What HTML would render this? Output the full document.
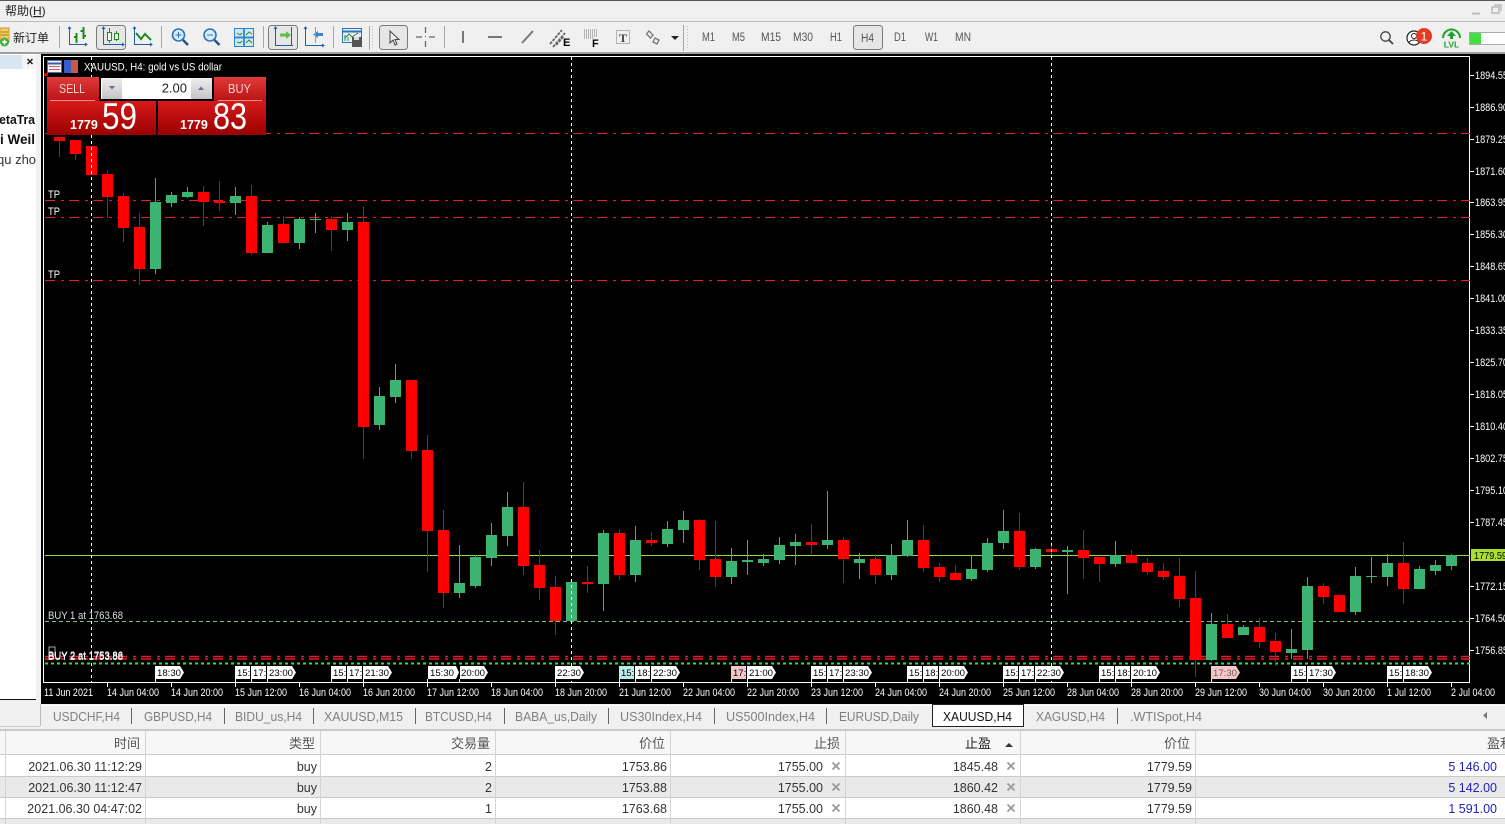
<!DOCTYPE html>
<html>
<head>
<meta charset="utf-8">
<style>
html,body{margin:0;padding:0;background:#000;overflow:hidden;width:1505px;height:824px}
svg{display:block}
text{font-family:"Liberation Sans","Noto Sans CJK SC",sans-serif}
.d{font-size:11px;fill:#fff}
.p{font-size:11px;fill:#fff}
.g{font-size:9.5px;fill:#000}
.tab{font-size:12.5px;fill:#808080}
.th{font-size:13px;fill:#555;text-anchor:end}
.td{font-size:12.5px;fill:#333;text-anchor:end}
.bl{font-size:12.5px;fill:#2222bb;text-anchor:end}
.tf{font-size:11.5px;fill:#555}
</style>
</head>
<body>
<svg width="1505" height="824" viewBox="0 0 1505 824" xmlns="http://www.w3.org/2000/svg">
<defs>
<linearGradient id="r1" x1="0" y1="0" x2="0" y2="1"><stop offset="0" stop-color="#e23a3a"/><stop offset="1" stop-color="#b81414"/></linearGradient>
<linearGradient id="r2" x1="0" y1="0" x2="0" y2="1"><stop offset="0" stop-color="#d81a1a"/><stop offset="1" stop-color="#9a0000"/></linearGradient>
<linearGradient id="sp" x1="0" y1="0" x2="0" y2="1"><stop offset="0" stop-color="#eee"/><stop offset="1" stop-color="#c4c4c4"/></linearGradient>
</defs>

<!-- window chrome -->
<rect width="1505" height="54" fill="#f0f0f0"/>
<rect width="1505" height="1" fill="#555"/>
<rect y="21" width="1505" height="1" fill="#bdbdbd"/>
<rect y="52" width="1505" height="2" fill="#a0a0a0"/>
<text x="5" y="15" font-size="12" fill="#222">帮助(<tspan text-decoration="underline">H</tspan>)</text>
<path d="M1472 13.5h8" stroke="#bbb" stroke-width="2"/>
<path d="M1492 7h7v6h-7zM1494 5h7v6" fill="none" stroke="#bbb" stroke-width="1.5"/>

<!-- toolbar -->
<path d="M59.5 26V48M161.5 26V48M263.5 26V48M333.5 26V48M369.5 26V50M444.5 26V48M683.5 25V51" stroke="#a8a8a8"/>
<path d="M372.5 26V50M687.5 26V50" stroke="#bbb" stroke-dasharray="1 2"/>
<rect x="96.5" y="25.5" width="29" height="24" rx="3" fill="#e6e6e6" stroke="#7a7a7a"/>
<rect x="268.5" y="25.5" width="29" height="24" rx="3" fill="#e6e6e6" stroke="#7a7a7a"/>
<rect x="379.5" y="25.5" width="28" height="24" rx="3" fill="#e6e6e6" stroke="#7a7a7a"/>
<rect x="853.5" y="25.5" width="29" height="24" rx="3" fill="#e6e6e6" stroke="#7a7a7a"/>

<!-- new order -->
<rect x="0" y="28" width="9" height="14" fill="#f4cf62" stroke="#c99a2e"/>
<path d="M1 32h7M1 35h7" stroke="#a87c1e"/>
<circle cx="4.5" cy="42" r="4.5" fill="#3fae3f"/>
<path d="M4.5 39.5v5M2 42h5" stroke="#fff" stroke-width="1.5"/>
<text x="13" y="42" font-size="12" fill="#222">新订单</text>

<!-- chart type icons -->
<g fill="none" stroke="#1d5fa8">
<path d="M69.5 27V44.5H87M68 29l1.500-2 1.500 2M85 43l2 1.500-2 1.500"/>
<path d="M103.500 27V44.500H124M102 29l1.500-2 1.500 2M122 43l2 1.500-2 1.500"/>
<path d="M134.500 27V44.500H152M133 29l1.500-2 1.500 2M150 43l2 1.500-2 1.500"/>
<path d="M275.500 27V45.500H293M291.500 27V45.500M274 29l1.500-2 1.500 2"/>
<path d="M305.500 27V45.500H324M304 29l1.500-2 1.500 2M322 44l2 1.500-2 1.500"/>
</g>
<path d="M76.500 33V43M83.500 27V39" stroke="#1f8a1f" stroke-width="2"/>
<path d="M74 37h2M80.500 31h3M84 36h2" stroke="#1f8a1f" stroke-width="2"/>
<path d="M109.500 28V43M116.500 31V41" stroke="#1f8a1f"/>
<rect x="107.500" y="32.500" width="4" height="8" fill="#f4f4f4" stroke="#1f8a1f"/>
<rect x="114.500" y="33.500" width="4" height="6" fill="#f4f4f4" stroke="#1f8a1f"/>
<path d="M136 33L141 39L145 34L151 40" fill="none" stroke="#1f8a1f" stroke-width="2"/>
<!-- zoom -->
<circle cx="178.5" cy="35" r="6" fill="#d8ecfa" stroke="#2b74b8" stroke-width="1.6"/>
<path d="M175.5 35h6M178.5 32v6" stroke="#2b74b8"/>
<path d="M183 40l5 5" stroke="#23507e" stroke-width="2.5"/>
<circle cx="210" cy="35" r="6" fill="#d8ecfa" stroke="#2b74b8" stroke-width="1.6"/>
<path d="M207 35h6" stroke="#2b74b8"/>
<path d="M214.500 40l5 5" stroke="#23507e" stroke-width="2.5"/>
<!-- tile -->
<rect x="234.500" y="28.500" width="19" height="18" fill="#cfe7f8" stroke="#2b84c8"/>
<path d="M234 37.500h20M244 28v19" stroke="#2b84c8" stroke-width="1.800"/>
<path d="M237 33l3 2 2-2M246 35l3-3 3 2M237 42l3 1 2-2M246 43l3-3 3 3" fill="none" stroke="#2d8a2d"/>
<!-- shift -->
<path d="M280 33.500h6v-2.500l5 4-5 4v-2.500h-6z" fill="#5fbf4a"/>
<path d="M318 31l-5 3.500 5 3.500z M318 33h5v3h-5z" fill="#3a86c8"/>
<path d="M315.500 27v16" stroke="#999"/>
<!-- template -->
<rect x="342.500" y="28.500" width="19" height="14" fill="#e6f1fa" stroke="#2b74b8"/>
<path d="M342 31.500h20" stroke="#2b74b8" stroke-width="2"/>
<path d="M345 41v-6M348 41v-4M345 38l4-4 3 3 6-4" fill="none" stroke="#2d8a2d"/>
<rect x="352" y="37" width="10" height="10" fill="#555"/>
<rect x="354" y="37" width="5" height="3" fill="#ddd"/>
<!-- cursor -->
<path d="M390 31v12l3-3 2 5 2-1-2-4.500h4z" fill="#eee" stroke="#444"/>
<path d="M416 37h6M429 37h6M425.500 27v6M425.500 41v6" stroke="#666" stroke-width="1.3"/>
<path d="M425 36h1v1h-1z" fill="#666"/>
<path d="M463 31v12" stroke="#777" stroke-width="2"/>
<path d="M488 37h14" stroke="#777" stroke-width="2"/>
<path d="M522 43l11-12" stroke="#777" stroke-width="2"/>
<path d="M550 44l12-14M553 47l12-14M556 45l8-9" stroke="#666" stroke-width="1.8" stroke-dasharray="3 1"/>
<text x="563" y="46" font-size="11" font-weight="bold" fill="#000">E</text>
<path d="M584 30h13M584 32h13M584 34h13M584 36h13M584 38h10" stroke="#777" stroke-dasharray="1 1"/>
<text x="592" y="47" font-size="11" font-weight="bold" fill="#000">F</text>
<rect x="616.5" y="30.500" width="13" height="13" fill="none" stroke="#777" stroke-dasharray="1 1"/>
<text x="619" y="42" font-size="12" fill="#444" style="font-family:'Liberation Serif',serif;font-weight:bold">T</text>
<path d="M649 31l4 4-2.500 3-4-4zM655 38l4 2-2 4-4-2z" fill="none" stroke="#777" stroke-width="1.300"/>
<path d="M671 36h8l-4 4z" fill="#222"/>
<!-- timeframes -->
<text class="tf" x="702" y="41" textLength="13" lengthAdjust="spacingAndGlyphs">M1</text>
<text class="tf" x="732" y="41" textLength="13" lengthAdjust="spacingAndGlyphs">M5</text>
<text class="tf" x="761" y="41" textLength="20" lengthAdjust="spacingAndGlyphs">M15</text>
<text class="tf" x="793" y="41" textLength="20" lengthAdjust="spacingAndGlyphs">M30</text>
<text class="tf" x="830" y="41" textLength="12" lengthAdjust="spacingAndGlyphs">H1</text>
<text class="tf" x="861" y="42" textLength="13" lengthAdjust="spacingAndGlyphs">H4</text>
<text class="tf" x="894" y="41" textLength="12" lengthAdjust="spacingAndGlyphs">D1</text>
<text class="tf" x="925" y="41" textLength="13" lengthAdjust="spacingAndGlyphs">W1</text>
<text class="tf" x="955" y="41" textLength="16" lengthAdjust="spacingAndGlyphs">MN</text>
<!-- right icons -->
<circle cx="1385.5" cy="36.5" r="4.7" fill="none" stroke="#444" stroke-width="1.3"/>
<path d="M1389 40l4 4" stroke="#444" stroke-width="1.8"/>
<circle cx="1414" cy="38" r="7" fill="#fff" stroke="#222" stroke-width="1.2"/>
<circle cx="1414" cy="36" r="2.5" fill="none" stroke="#222"/>
<path d="M1409 43c1-4 9-4 10 0" fill="none" stroke="#222"/>
<circle cx="1424" cy="36" r="8" fill="#e03c26"/>
<text x="1424" y="40.5" font-size="12" fill="#fff" text-anchor="middle">1</text>
<path d="M1443 38a8.500 8.500 0 0 1 17 0" fill="none" stroke="#20a030" stroke-width="2"/>
<path d="M1451.5 31l4.500 5h-3v3h-3v-3h-3z" fill="#20a030"/>
<text x="1451.5" y="47.5" font-size="8.5" font-weight="bold" fill="#20a030" text-anchor="middle">LVL</text>
<rect x="1469.5" y="32.5" width="36" height="12" fill="#fff" stroke="#aaa"/>
<rect x="1470" y="33" width="11" height="11" fill="#3fe03f"/>

<!-- left panel -->
<rect x="0" y="54" width="41" height="650" fill="#f0f0f0"/>
<rect x="0" y="54" width="38" height="646" fill="#fff"/>
<rect x="0" y="55" width="22" height="14" fill="#d8e6f4"/>
<rect x="22" y="55" width="16" height="14" fill="#f4f5f6"/>
<path d="M27.5 59l5 5M32.5 59l-5 5" stroke="#222" stroke-width="1.5"/>
<rect x="0" y="699" width="36" height="1" fill="#111"/>
<text x="-11" y="124" font-size="13" font-weight="bold" fill="#111" textLength="46" lengthAdjust="spacingAndGlyphs">MetaTra</text>
<text x="0" y="144" font-size="13.5" font-weight="bold" fill="#111">i Weil</text>
<text x="-3" y="164" font-size="13" fill="#333">qu zho</text>
<rect x="36" y="54" width="5" height="650" fill="#f0f0f0"/>

<!-- chart -->
<rect x="41" y="54" width="1464" height="650" fill="#000"/>
<path d="M43.5 56V682.5M43 56.5H1470M1469.5 56V682.5M43 682.500H1470" stroke="#fff" fill="none"/>
<!-- price line & levels -->
<path d="M45 555.5H1470" stroke="#90dc40"/>
<path d="M45 621.5H1470" stroke="#70c870" stroke-dasharray="4 3"/>
<path d="M45 663.5H1470" stroke="#30e040" stroke-width="2" stroke-dasharray="3 3"/>
<g fill="none" stroke="#ee1c28" stroke-dasharray="10 6 3 5">
<path d="M45 133.5H1470"/>
<path d="M45 200.5H1470"/>
<path d="M45 217.5H1470"/>
<path d="M45 280.5H1470"/>
<path d="M45 656.5H1470" stroke-width="1.5"/>
<path d="M45 659H1470" stroke-width="1.5"/>
</g>
<!-- candles: green -->
<path stroke="#3cb371" fill="none" d="M155.5 178V274M171.5 192V207M187.5 187V198M235.5 187V215M267.5 222V253M299.5 217V249M315.5 213V233M347.5 213V241M379.5 387V430M395.5 364V403M459.5 545V598M475.5 555V588M491.5 523V566M507.5 492V546M571.5 582V621M603.5 530V611M635.5 526V582M667.5 521V547M683.5 511V543M731.5 548V584M747.5 540V575M763.5 554V566M779.5 537V564M795.5 534V565M827.5 491V549M859.5 553V579M891.5 544V580M907.5 520V557M971.5 555V581M987.5 538V572M1003.5 510V549M1035.5 548V569M1067.5 546V594M1115.5 541V567M1211.5 613V661M1243.5 625V635M1291.5 629V659M1307.5 577V659M1355.5 567V615M1371.5 557V583M1387.5 554V586M1419.5 566V589M1435.5 560V575M1451.5 554V570"/>
<path stroke="#3cb371" stroke-width="11" fill="none" d="M155.5 202V269M171.5 195V203M187.5 192V197M235.5 196V203M267.5 225V253M299.5 219V243M315.5 219V220M347.5 222V230M379.5 396V425M395.5 380V397M459.5 583V593M475.5 557V586M491.5 535V558M507.5 507V536M571.5 582V621M603.5 533V584M635.5 540V575M667.5 529V544M683.5 520V530M731.5 561V577M747.5 560V562M763.5 559V563M779.5 545V560M795.5 542V546M827.5 540V545M859.5 559V563M891.5 555V575M907.5 540V556M971.5 569V579M987.5 543V570M1003.5 531V543M1035.5 549V567M1067.5 550V552M1115.5 555V564M1211.5 624V660M1243.5 627V635M1291.5 649V653M1307.5 586V650M1355.5 576V612M1371.5 576V577M1387.5 563V577M1419.5 569V589M1435.5 565V571M1451.5 555V566"/>
<!-- candles: red -->
<path stroke="#e00000" fill="none" d="M59.5 137V157M75.5 140V160M107.5 170V218M123.5 193V242M139.5 213V285M203.5 186V226M219.5 181V211M251.5 185V255M283.5 216V243M331.5 216V251M363.5 206V459M411.5 380V459M427.5 435V572M443.5 510V608M523.5 482V575M539.5 550V600M555.5 576V635M587.5 566V593M619.5 529V580M651.5 532V546M699.5 519V570M715.5 521V587M811.5 524V554M843.5 537V583M875.5 554V584M923.5 525V572M939.5 563V582M955.5 565V580M1019.5 513V570M1051.5 542V555M1083.5 530V579M1099.5 557V582M1131.5 550V563M1147.5 558V575M1163.5 563V580M1179.5 558V607M1195.5 571V677M1227.5 614V638M1259.5 618V648M1275.5 633V666M1323.5 583V604M1403.5 542V604"/>
<path stroke="#ff0000" stroke-width="11" fill="none" d="M59.5 137V141M75.5 140V154M91.5 146V175M107.5 174V197M123.5 196V228M139.5 227V269M203.5 192V202M219.5 201V203M251.5 196V253M283.5 224V243M331.5 219V230M363.5 222V427M411.5 380V451M427.5 450V531M443.5 530V593M523.5 507V566M539.5 565V588M555.5 587V621M587.5 582V584M619.5 533V575M651.5 540V543M699.5 520V560M715.5 559V577M811.5 542V545M843.5 540V559M875.5 559V575M923.5 540V568M939.5 567V577M955.5 573V580M1019.5 531V567M1051.5 549V552M1083.5 550V558M1099.5 557V564M1131.5 555V563M1147.5 563V572M1163.5 571V577M1179.5 576V599M1195.5 598V660M1227.5 624V638M1259.5 627V642M1275.5 641V652M1323.5 586V597M1339.5 595V612M1403.5 563V589"/>
<!-- crosshair verticals -->
<path d="M91.5 57V682M571.5 57V682M1051.5 57V682" stroke="#fff" stroke-dasharray="3 3"/>

<!-- chart labels -->
<text x="48" y="198" class="p" textLength="12" lengthAdjust="spacingAndGlyphs">TP</text>
<text x="48" y="215" class="p" textLength="12" lengthAdjust="spacingAndGlyphs">TP</text>
<text x="48" y="278" class="p" textLength="12" lengthAdjust="spacingAndGlyphs">TP</text>
<text x="48" y="619" class="p" style="fill:#ddd" textLength="75" lengthAdjust="spacingAndGlyphs">BUY 1 at 1763.68</text>
<text x="48" y="660" class="p" textLength="75" lengthAdjust="spacingAndGlyphs">BUY 2 at 1753.88</text>
<text x="48" y="659" class="p" textLength="75" lengthAdjust="spacingAndGlyphs">BUY 2 at 1753.86</text>
<rect x="49" y="647" width="6" height="8" fill="none" stroke="#ccc" stroke-width=".8"/>

<!-- chart title -->
<rect x="47.5" y="60.5" width="14" height="12" fill="#f4f4f4" stroke="#4a6fb5"/>
<path d="M48 63.5h13" stroke="#3a5ca8" stroke-width="2"/>
<path d="M49 66.5h11M49 69.500h11" stroke="#d06060"/>
<rect x="64" y="60" width="7" height="13" fill="#3a5cc8"/>
<rect x="71" y="60" width="7" height="13" fill="#c85a4a"/>
<text x="84" y="70.5" class="p" textLength="138" lengthAdjust="spacingAndGlyphs">XAUUSD, H4:  gold vs US dollar</text>
<rect x="44" y="73" width="4" height="3" fill="#e00000"/>

<!-- one click panel -->
<rect x="47" y="77" width="52" height="24" fill="url(#r1)"/>
<rect x="214" y="77" width="52" height="24" fill="url(#r1)"/>
<rect x="47" y="101" width="109" height="34" fill="url(#r2)"/>
<rect x="158" y="101" width="108" height="34" fill="url(#r2)"/>
<path d="M50 100.5H95M218 100.5H262" stroke="#f08a8a"/>
<text x="59" y="93" font-size="13" fill="#f6d0d0" textLength="26" lengthAdjust="spacingAndGlyphs">SELL</text>
<text x="228" y="93" font-size="13" fill="#f6d0d0" textLength="23" lengthAdjust="spacingAndGlyphs">BUY</text>
<rect x="100" y="76" width="113" height="24" fill="#000"/>
<rect x="101" y="78" width="111" height="21" fill="#fff"/>
<rect x="102" y="78" width="20" height="21" fill="url(#sp)"/>
<rect x="191" y="78" width="21" height="21" fill="url(#sp)"/>
<path d="M109 86h6l-3 3.500z" fill="#6a6a90"/>
<path d="M198 90h6l-3-3.500z" fill="#6a6a90"/>
<text x="187" y="92.5" font-size="13" fill="#222" text-anchor="end">2.00</text>
<text x="70" y="129" font-size="12.5" font-weight="bold" fill="#fff">1779</text>
<text x="102" y="129" font-size="37" fill="#fff" textLength="35" lengthAdjust="spacingAndGlyphs">59</text>
<text x="180" y="129" font-size="12.5" font-weight="bold" fill="#fff">1779</text>
<text x="213" y="129" font-size="37" fill="#fff" textLength="34" lengthAdjust="spacingAndGlyphs">83</text>

<!-- price axis -->
<g stroke="#fff">
<path d="M1470 75.5h4M1470 107.5h4M1470 139.5h4M1470 171.5h4M1470 202.5h4M1470 234.5h4M1470 266.5h4M1470 298.5h4M1470 330.5h4M1470 362.5h4M1470 394.5h4M1470 426.5h4M1470 458.5h4M1470 490.5h4M1470 522.5h4M1470 586.5h4M1470 618.5h4M1470 650.5h4"/>
</g>
<text class="p" x="1475" y="79" textLength="33" lengthAdjust="spacingAndGlyphs">1894.55</text>
<text class="p" x="1475" y="111" textLength="33" lengthAdjust="spacingAndGlyphs">1886.90</text>
<text class="p" x="1475" y="143" textLength="33" lengthAdjust="spacingAndGlyphs">1879.25</text>
<text class="p" x="1475" y="175" textLength="33" lengthAdjust="spacingAndGlyphs">1871.60</text>
<text class="p" x="1475" y="206" textLength="33" lengthAdjust="spacingAndGlyphs">1863.95</text>
<text class="p" x="1475" y="238" textLength="33" lengthAdjust="spacingAndGlyphs">1856.30</text>
<text class="p" x="1475" y="270" textLength="33" lengthAdjust="spacingAndGlyphs">1848.65</text>
<text class="p" x="1475" y="302" textLength="33" lengthAdjust="spacingAndGlyphs">1841.00</text>
<text class="p" x="1475" y="334" textLength="33" lengthAdjust="spacingAndGlyphs">1833.35</text>
<text class="p" x="1475" y="366" textLength="33" lengthAdjust="spacingAndGlyphs">1825.70</text>
<text class="p" x="1475" y="398" textLength="33" lengthAdjust="spacingAndGlyphs">1818.05</text>
<text class="p" x="1475" y="430" textLength="33" lengthAdjust="spacingAndGlyphs">1810.40</text>
<text class="p" x="1475" y="462" textLength="33" lengthAdjust="spacingAndGlyphs">1802.75</text>
<text class="p" x="1475" y="494" textLength="33" lengthAdjust="spacingAndGlyphs">1795.10</text>
<text class="p" x="1475" y="526" textLength="33" lengthAdjust="spacingAndGlyphs">1787.45</text>
<text class="p" x="1475" y="590" textLength="33" lengthAdjust="spacingAndGlyphs">1772.15</text>
<text class="p" x="1475" y="622" textLength="33" lengthAdjust="spacingAndGlyphs">1764.50</text>
<text class="p" x="1475" y="654" textLength="33" lengthAdjust="spacingAndGlyphs">1756.85</text>
<rect x="1471" y="549" width="34" height="12" fill="#a8e030"/>
<text x="1474" y="559" font-size="10.5" fill="#000" textLength="33" lengthAdjust="spacingAndGlyphs">1779.59</text>

<!-- time ticks -->
<path stroke="#fff" d="M107.5 682v5M171.5 682v5M235.5 682v5M299.5 682v5M363.5 682v5M427.5 682v5M491.5 682v5M555.5 682v5M619.5 682v5M683.5 682v5M747.5 682v5M811.5 682v5M875.5 682v5M939.5 682v5M1003.5 682v5M1067.5 682v5M1131.5 682v5M1195.5 682v5M1259.5 682v5M1323.5 682v5M1387.5 682v5M1451.5 682v5M155.5 679v3M235.5 679v3M251.5 679v3M267.5 679v3M331.5 679v3M347.5 679v3M363.5 679v3M427.5 679v3M459.5 679v3M555.5 679v3M619.5 679v3M635.5 679v3M651.5 679v3M731.5 679v3M747.5 679v3M811.5 679v3M827.5 679v3M843.5 679v3M907.5 679v3M923.5 679v3M939.5 679v3M1003.5 679v3M1019.5 679v3M1035.5 679v3M1099.5 679v3M1115.5 679v3M1131.5 679v3M1211.5 679v3M1291.5 679v3M1307.5 679v3M1387.5 679v3M1403.5 679v3"/>
<!-- date labels -->
<text class="d" x="44" y="696" textLength="49" lengthAdjust="spacingAndGlyphs">11 Jun 2021</text>
<text class="d" x="107" y="696" textLength="52" lengthAdjust="spacingAndGlyphs">14 Jun 04:00</text>
<text class="d" x="171" y="696" textLength="52" lengthAdjust="spacingAndGlyphs">14 Jun 20:00</text>
<text class="d" x="235" y="696" textLength="52" lengthAdjust="spacingAndGlyphs">15 Jun 12:00</text>
<text class="d" x="299" y="696" textLength="52" lengthAdjust="spacingAndGlyphs">16 Jun 04:00</text>
<text class="d" x="363" y="696" textLength="52" lengthAdjust="spacingAndGlyphs">16 Jun 20:00</text>
<text class="d" x="427" y="696" textLength="52" lengthAdjust="spacingAndGlyphs">17 Jun 12:00</text>
<text class="d" x="491" y="696" textLength="52" lengthAdjust="spacingAndGlyphs">18 Jun 04:00</text>
<text class="d" x="555" y="696" textLength="52" lengthAdjust="spacingAndGlyphs">18 Jun 20:00</text>
<text class="d" x="619" y="696" textLength="52" lengthAdjust="spacingAndGlyphs">21 Jun 12:00</text>
<text class="d" x="683" y="696" textLength="52" lengthAdjust="spacingAndGlyphs">22 Jun 04:00</text>
<text class="d" x="747" y="696" textLength="52" lengthAdjust="spacingAndGlyphs">22 Jun 20:00</text>
<text class="d" x="811" y="696" textLength="52" lengthAdjust="spacingAndGlyphs">23 Jun 12:00</text>
<text class="d" x="875" y="696" textLength="52" lengthAdjust="spacingAndGlyphs">24 Jun 04:00</text>
<text class="d" x="939" y="696" textLength="52" lengthAdjust="spacingAndGlyphs">24 Jun 20:00</text>
<text class="d" x="1003" y="696" textLength="52" lengthAdjust="spacingAndGlyphs">25 Jun 12:00</text>
<text class="d" x="1067" y="696" textLength="52" lengthAdjust="spacingAndGlyphs">28 Jun 04:00</text>
<text class="d" x="1131" y="696" textLength="52" lengthAdjust="spacingAndGlyphs">28 Jun 20:00</text>
<text class="d" x="1195" y="696" textLength="52" lengthAdjust="spacingAndGlyphs">29 Jun 12:00</text>
<text class="d" x="1259" y="696" textLength="52" lengthAdjust="spacingAndGlyphs">30 Jun 04:00</text>
<text class="d" x="1323" y="696" textLength="52" lengthAdjust="spacingAndGlyphs">30 Jun 20:00</text>
<text class="d" x="1387" y="696" textLength="44" lengthAdjust="spacingAndGlyphs">1 Jul 12:00</text>
<text class="d" x="1451" y="696" textLength="44" lengthAdjust="spacingAndGlyphs">2 Jul 04:00</text>

<!-- time tags -->
<g fill="#fff">
<path d="M155 666h25l4 6.5-4 6.500h-25z"/>
<path d="M235 666h15v13h-15zM251 666h15v13h-15zM267 666h25l4 6.5-4 6.500h-25z"/>
<path d="M331 666h15v13h-15zM347 666h15v13h-15zM363 666h25l4 6.5-4 6.500h-25z"/>
<path d="M428 666h28l3 6.5-3 6.500h-28zM460 666h24l4 6.5-4 6.500h-24z"/>
<path d="M555 666h25l4 6.5-4 6.500h-25z"/>
<path fill="#bfeaea" d="M619 666h15v13h-15z"/>
<path d="M635 666h15v13h-15zM651 666h25l4 6.5-4 6.500h-25z"/>
<path fill="#f6c4cc" d="M731 666h15v13h-15z"/>
<path d="M747 666h25l4 6.5-4 6.500h-25z"/>
<path d="M811 666h15v13h-15zM827 666h15v13h-15zM843 666h25l4 6.5-4 6.500h-25z"/>
<path d="M907 666h15v13h-15zM923 666h15v13h-15zM939 666h25l4 6.5-4 6.500h-25z"/>
<path d="M1003 666h15v13h-15zM1019 666h15v13h-15zM1035 666h25l4 6.5-4 6.500h-25z"/>
<path d="M1099 666h15v13h-15zM1115 666h15v13h-15zM1131 666h25l4 6.5-4 6.500h-25z"/>
<path fill="#f6c4cc" d="M1211 666h25l4 6.5-4 6.500h-25z"/>
<path d="M1291 666h15v13h-15zM1307 666h25l4 6.5-4 6.500h-25z"/>
<path d="M1387 666h15v13h-15zM1403 666h25l4 6.5-4 6.500h-25z"/>
</g>
<text class="g" x="157" y="676" textLength="24" lengthAdjust="spacingAndGlyphs">18:30</text>
<text class="g" x="237" y="676">15:</text><text class="g" x="253" y="676">17:</text><text class="g" x="269" y="676" textLength="24" lengthAdjust="spacingAndGlyphs">23:00</text>
<text class="g" x="333" y="676">15:</text><text class="g" x="349" y="676">17:</text><text class="g" x="365" y="676" textLength="24" lengthAdjust="spacingAndGlyphs">21:30</text>
<text class="g" x="430" y="676" textLength="24" lengthAdjust="spacingAndGlyphs">15:30</text><text class="g" x="461" y="676" textLength="24" lengthAdjust="spacingAndGlyphs">20:00</text>
<text class="g" x="557" y="676" textLength="24" lengthAdjust="spacingAndGlyphs">22:30</text>
<text class="g" x="621" y="676">15:</text><text class="g" x="637" y="676">18:</text><text class="g" x="653" y="676" textLength="24" lengthAdjust="spacingAndGlyphs">22:30</text>
<text class="g" x="733" y="676">17:</text><text class="g" x="749" y="676" textLength="24" lengthAdjust="spacingAndGlyphs">21:00</text>
<text class="g" x="813" y="676">15:</text><text class="g" x="829" y="676">17:</text><text class="g" x="845" y="676" textLength="24" lengthAdjust="spacingAndGlyphs">23:30</text>
<text class="g" x="909" y="676">15:</text><text class="g" x="925" y="676">18:</text><text class="g" x="941" y="676" textLength="24" lengthAdjust="spacingAndGlyphs">20:00</text>
<text class="g" x="1005" y="676">15:</text><text class="g" x="1021" y="676">17:</text><text class="g" x="1037" y="676" textLength="24" lengthAdjust="spacingAndGlyphs">22:30</text>
<text class="g" x="1101" y="676">15:</text><text class="g" x="1117" y="676">18:</text><text class="g" x="1133" y="676" textLength="24" lengthAdjust="spacingAndGlyphs">20:10</text>
<text class="g" x="1213" y="676" textLength="24" lengthAdjust="spacingAndGlyphs" style="fill:#664">17:30</text>
<text class="g" x="1293" y="676">15:</text><text class="g" x="1309" y="676" textLength="24" lengthAdjust="spacingAndGlyphs">17:30</text>
<text class="g" x="1389" y="676">15:</text><text class="g" x="1405" y="676" textLength="24" lengthAdjust="spacingAndGlyphs">18:30</text>

<!-- tab bar -->
<rect x="0" y="704" width="1505" height="27" fill="#f0f0f0"/>
<path d="M40.5 704V726" stroke="#bbb"/>
<path d="M0 726.5H40" stroke="#ccc"/>
<path d="M41 705.5H1505" stroke="#fff"/>
<rect x="0" y="729" width="1505" height="2" fill="#c8c8c8"/>
<path d="M131.5 708V724M224.5 708V724M313.5 708V724M415.5 708V724M504.5 708V724M608.5 708V724M714.5 708V724M826.5 708V724M1117.5 708V724" stroke="#666"/>
<rect x="932.5" y="704.5" width="91" height="22" fill="#fff" stroke="#222"/>
<text class="tab" x="53" y="721" textLength="67" lengthAdjust="spacingAndGlyphs">USDCHF,H4</text>
<text class="tab" x="144" y="721" textLength="68" lengthAdjust="spacingAndGlyphs">GBPUSD,H4</text>
<text class="tab" x="235" y="721" textLength="67" lengthAdjust="spacingAndGlyphs">BIDU_us,H4</text>
<text class="tab" x="324" y="721" textLength="79" lengthAdjust="spacingAndGlyphs">XAUUSD,M15</text>
<text class="tab" x="425" y="721" textLength="67" lengthAdjust="spacingAndGlyphs">BTCUSD,H4</text>
<text class="tab" x="515" y="721" textLength="82" lengthAdjust="spacingAndGlyphs">BABA_us,Daily</text>
<text class="tab" x="620" y="721" textLength="82" lengthAdjust="spacingAndGlyphs">US30Index,H4</text>
<text class="tab" x="726" y="721" textLength="89" lengthAdjust="spacingAndGlyphs">US500Index,H4</text>
<text class="tab" x="839" y="721" textLength="80" lengthAdjust="spacingAndGlyphs">EURUSD,Daily</text>
<text class="tab" x="943" y="721" style="fill:#111" textLength="69" lengthAdjust="spacingAndGlyphs">XAUUSD,H4</text>
<text class="tab" x="1036" y="721" textLength="69" lengthAdjust="spacingAndGlyphs">XAGUSD,H4</text>
<text class="tab" x="1130" y="721" textLength="72" lengthAdjust="spacingAndGlyphs">.WTISpot,H4</text>
<path d="M1487 712v7l-4-3.500z" fill="#777"/>

<!-- table -->
<rect x="0" y="731" width="1505" height="93" fill="#fff"/>
<rect x="0" y="731" width="1505" height="23" fill="#f7f7f7"/>
<rect x="0" y="777" width="1505" height="20" fill="#e9e9e9"/>
<rect x="0" y="819" width="1505" height="5" fill="#e9e9e9"/>
<path d="M0 754.5H1505M0 776.5H1505M0 797.5H1505M0 818.5H1505" stroke="#c9c9c9"/>
<path d="M5.5 731V824M145.5 731V824M320.5 731V824M495.5 731V824M670.5 731V824M845.5 731V824M1020.5 731V824M1195.5 731V824" stroke="#d4d4d4"/>

<text class="th" x="140" y="748">时间</text>
<text class="th" x="315" y="748">类型</text>
<text class="th" x="490" y="748">交易量</text>
<text class="th" x="665" y="748">价位</text>
<text class="th" x="840" y="748">止损</text>
<text class="th" x="991" y="748" style="fill:#222">止盈</text>
<path d="M1005 747l4-4 4 4z" fill="#333"/>
<text class="th" x="1190" y="748">价位</text>
<text class="th" x="1513" y="748">盈利</text>

<text class="td" x="142" y="771">2021.06.30 11:12:29</text>
<text class="td" x="317" y="771">buy</text>
<text class="td" x="492" y="771">2</text>
<text class="td" x="667" y="771">1753.86</text>
<text class="td" x="823" y="771">1755.00</text>
<text class="td" x="998" y="771">1845.48</text>
<text class="td" x="1192" y="771">1779.59</text>
<text class="bl" x="1497" y="771">5 146.00</text>

<text class="td" x="142" y="792">2021.06.30 11:12:47</text>
<text class="td" x="317" y="792">buy</text>
<text class="td" x="492" y="792">2</text>
<text class="td" x="667" y="792">1753.88</text>
<text class="td" x="823" y="792">1755.00</text>
<text class="td" x="998" y="792">1860.42</text>
<text class="td" x="1192" y="792">1779.59</text>
<text class="bl" x="1497" y="792">5 142.00</text>

<text class="td" x="142" y="813">2021.06.30 04:47:02</text>
<text class="td" x="317" y="813">buy</text>
<text class="td" x="492" y="813">1</text>
<text class="td" x="667" y="813">1763.68</text>
<text class="td" x="823" y="813">1755.00</text>
<text class="td" x="998" y="813">1860.48</text>
<text class="td" x="1192" y="813">1779.59</text>
<text class="bl" x="1497" y="813">1 591.00</text>

<path d="M832.5 762.5l7 7M839.5 762.5l-7 7M1007.5 762.5l7 7M1014.5 762.5l-7 7M832.5 783.5l7 7M839.5 783.5l-7 7M1007.5 783.5l7 7M1014.5 783.5l-7 7M832.5 804.5l7 7M839.5 804.5l-7 7M1007.5 804.5l7 7M1014.5 804.5l-7 7" stroke="#9a9a9a" stroke-width="1.8"/>
</svg>
</body>
</html>
